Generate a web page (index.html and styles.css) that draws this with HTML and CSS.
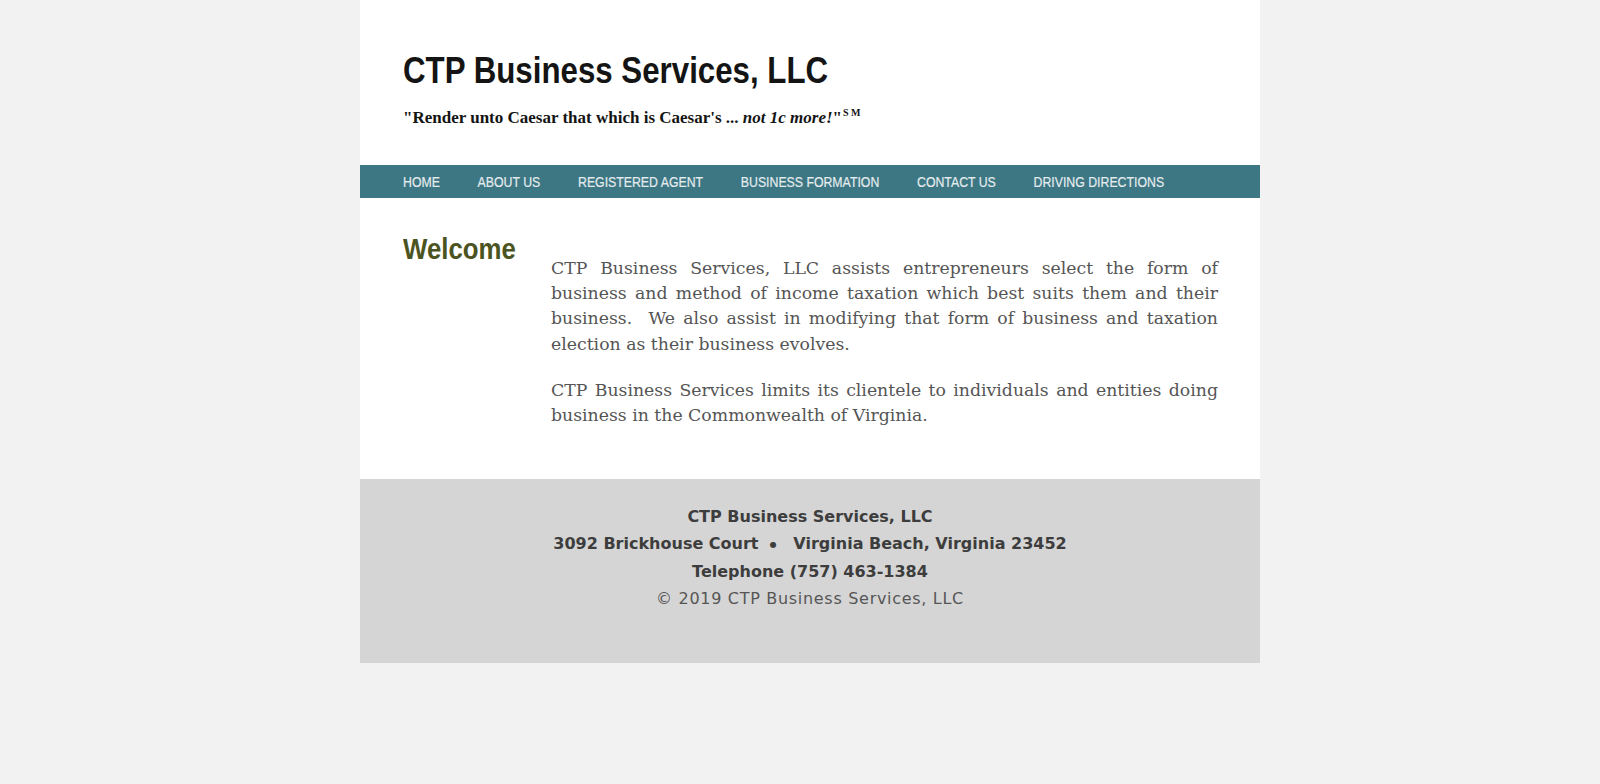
FILE: index.html
```html
<!DOCTYPE html>
<html lang="en">
<head>
<meta charset="utf-8">
<title>CTP Business Services, LLC</title>
<link rel="stylesheet" href="styles.css">
</head>
<body>
<div class="page">
  <header class="masthead">
    <h1 class="site-title"><span class="narrow">CTP Business Services, LLC</span></h1>
    <p class="tagline">"Render unto Caesar that which is Caesar's ... <em>not 1c more!</em>"<sup class="sm">S M</sup></p>
  </header>
  <nav class="nav">
    <div class="nav-list">
      <a href="#" class="nav-link">HOME</a>
      <a href="#" class="nav-link">ABOUT US</a>
      <a href="#" class="nav-link">REGISTERED AGENT</a>
      <a href="#" class="nav-link">BUSINESS FORMATION</a>
      <a href="#" class="nav-link">CONTACT US</a>
      <a href="#" class="nav-link">DRIVING DIRECTIONS</a>
    </div>
  </nav>
  <main class="content">
    <div class="side">
      <h2 class="welcome"><span class="narrow welcome-text">Welcome</span></h2>
    </div>
    <div class="body-text">
      <p class="para">
        <span class="line">CTP Business Services, LLC assists entrepreneurs select the form of</span>
        <span class="line">business and method of income taxation which best suits them and their</span>
        <span class="line">business.&nbsp; We also assist in modifying that form of business and taxation</span>
        <span class="line last">election as their business evolves.</span>
      </p>
      <p class="para">
        <span class="line">CTP Business Services limits its clientele to individuals and entities doing</span>
        <span class="line last">business in the Commonwealth of Virginia.</span>
      </p>
    </div>
  </main>
  <footer class="footer">
    <div class="foot-strong">CTP Business Services, LLC</div>
    <div class="foot-strong">3092 Brickhouse Court &nbsp;<span class="dot">●</span>&nbsp;&nbsp; Virginia Beach, Virginia 23452</div>
    <div class="foot-strong">Telephone (757) 463-1384</div>
    <div class="foot-copy">© 2019 CTP Business Services, LLC</div>
  </footer>
</div>
</body>
</html>
```
FILE: styles.css
```css
html, body {
  margin: 0;
  padding: 0;
  background: #f2f2f2;
}

.page {
  width: 900px;
  margin-left: calc(50% - 440px);
  background: #ffffff;
}

.masthead {
  padding: 49px 43px 38px;
}

.narrow {
  display: inline-block;
  transform-origin: 0 0;
  white-space: nowrap;
}

.site-title {
  margin: 0;
  font-family: "Liberation Sans", Arial, sans-serif;
  font-weight: bold;
  font-size: 37px;
  line-height: 43px;
  color: #141414;
}

.site-title .narrow {
  transform: scaleX(0.845);
}

.tagline {
  margin: 16px 0 0;
  font-family: "Liberation Serif", serif;
  font-weight: bold;
  font-size: 17px;
  line-height: 19px;
  color: #141414;
}

.tagline em {
  font-style: italic;
}

.sm {
  font-size: 10px;
  line-height: 0;
  vertical-align: 7px;
  margin-left: 1px;
}

.nav {
  height: 33px;
  padding: 0 43px;
  background: #3d7784;
}

.nav-list {
  display: flex;
  gap: 46px;
  transform: scaleX(0.82);
  transform-origin: 0 0;
  white-space: nowrap;
}

.nav-link {
  font-family: "Liberation Sans", Arial, sans-serif;
  font-size: 15px;
  line-height: 33px;
  color: #e4ecee;
  text-decoration: none;
  -webkit-text-stroke: 0.2px #e4ecee;
}

.content {
  display: flex;
  padding: 33px 42px 51px 43px;
}

.side {
  width: 148px;
  flex: none;
}

.welcome {
  margin: 0;
  font-family: "Liberation Sans", Arial, sans-serif;
  font-weight: bold;
  font-size: 30px;
  line-height: 36px;
  color: #4b5321;
}

.welcome-text {
  transform: scaleX(0.86);
}

.body-text {
  flex: 1;
  margin-top: 25px;
}

.para {
  margin: 0 0 21px;
  font-family: "DejaVu Serif", serif;
  font-size: 17.3px;
  line-height: 25.2px;
  color: #555555;
}

.para:last-child {
  margin-bottom: 0;
}

.line {
  display: block;
  text-align: justify;
  text-align-last: justify;
  white-space: nowrap;
}

.line.last {
  text-align-last: left;
}

.footer {
  background: #d5d5d5;
  padding: 24px 0 51px;
  text-align: center;
  font-family: "DejaVu Sans", sans-serif;
  font-size: 16px;
  line-height: 27px;
}

.foot-strong {
  font-weight: bold;
  color: #3d3d3d;
}

.dot {
  font-size: 8px;
  vertical-align: 2px;
}

.foot-copy {
  color: #555555;
  letter-spacing: 0.7px;
}
```
